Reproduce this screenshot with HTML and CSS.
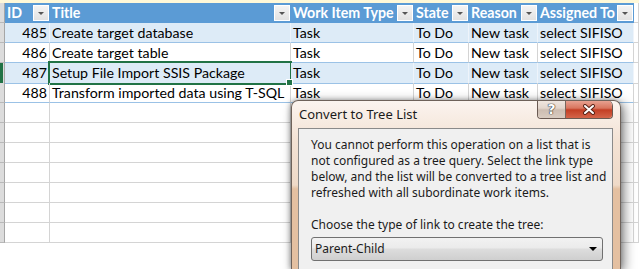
FILE: index.html
```html
<!DOCTYPE html>
<html lang="en">
<head>
  <meta charset="UTF-8">
  <title>Work Items - Convert to Tree List</title>
  <link rel="stylesheet" href="styles.css">
</head>
<body>
  <div class="sheet">
    <div class="topline"></div>
    <div class="row head">
      <div class="rh"></div>
      <div class="c">ID<span class="dd"></span></div>
      <div class="c">Title<span class="dd"></span></div>
      <div class="c">Work Item Type<span class="dd"></span></div>
      <div class="c">State<span class="dd"></span></div>
      <div class="c">Reason<span class="dd"></span></div>
      <div class="c">Assigned To<span class="dd"></span></div>
      <div class="c out"></div>
    </div>
    <div class="row item band">
      <div class="rh"></div>
      <div class="c num">485</div>
      <div class="c">Create target database</div>
      <div class="c">Task</div>
      <div class="c">To Do</div>
      <div class="c">New task</div>
      <div class="c">select SIFISO</div>
      <div class="c out"></div>
    </div>
    <div class="row item">
      <div class="rh"></div>
      <div class="c num">486</div>
      <div class="c">Create target table</div>
      <div class="c">Task</div>
      <div class="c">To Do</div>
      <div class="c">New task</div>
      <div class="c">select SIFISO</div>
      <div class="c out"></div>
    </div>
    <div class="row item band current">
      <div class="rh"></div>
      <div class="c num">487</div>
      <div class="c selected">Setup File Import SSIS Package<span class="handle"></span></div>
      <div class="c">Task</div>
      <div class="c">To Do</div>
      <div class="c">New task</div>
      <div class="c">select SIFISO</div>
      <div class="c out"></div>
    </div>
    <div class="row item last">
      <div class="rh"></div>
      <div class="c num">488</div>
      <div class="c">Transform imported data using T-SQL</div>
      <div class="c">Task</div>
      <div class="c">To Do</div>
      <div class="c">New task</div>
      <div class="c">select SIFISO</div>
      <div class="c out"><span class="resize"></span></div>
    </div>
    <div class="row"><div class="rh"></div><div class="c"></div><div class="c"></div><div class="c"></div><div class="c"></div><div class="c"></div><div class="c"></div><div class="c"></div></div>
    <div class="row"><div class="rh"></div><div class="c"></div><div class="c"></div><div class="c"></div><div class="c"></div><div class="c"></div><div class="c"></div><div class="c"></div></div>
    <div class="row"><div class="rh"></div><div class="c"></div><div class="c"></div><div class="c"></div><div class="c"></div><div class="c"></div><div class="c"></div><div class="c"></div></div>
    <div class="row"><div class="rh"></div><div class="c"></div><div class="c"></div><div class="c"></div><div class="c"></div><div class="c"></div><div class="c"></div><div class="c"></div></div>
    <div class="row"><div class="rh"></div><div class="c"></div><div class="c"></div><div class="c"></div><div class="c"></div><div class="c"></div><div class="c"></div><div class="c"></div></div>
    <div class="row"><div class="rh"></div><div class="c"></div><div class="c"></div><div class="c"></div><div class="c"></div><div class="c"></div><div class="c"></div><div class="c"></div></div>
    <div class="row"><div class="rh"></div><div class="c"></div><div class="c"></div><div class="c"></div><div class="c"></div><div class="c"></div><div class="c"></div><div class="c"></div></div>
  </div>

  <div class="dialog">
    <div class="dlg-title">
      <span class="dlg-caption">Convert to Tree List</span>
      <div class="dlg-buttons">
        <span class="btn-help">?</span>
        <span class="btn-close">
          <svg width="14" height="11" viewBox="0 0 14 11">
            <path d="M3 2 L11 9 M11 2 L3 9" stroke="#5a2418" stroke-width="4" stroke-linecap="round"/>
            <path d="M3 2 L11 9 M11 2 L3 9" stroke="#fff" stroke-width="2" stroke-linecap="round"/>
          </svg>
        </span>
      </div>
    </div>
    <div class="dlg-body">
      <p class="dlg-msg">You cannot perform this operation on a list that is<br>not configured as a tree query. Select the link type<br>below, and the list will be converted to a tree list and<br>refreshed with all subordinate work items.</p>
      <p class="dlg-label">Choose the type of link to create the tree:</p>
      <div class="combo">
        <span>Parent-Child</span>
        <span class="combo-arrow"></span>
      </div>
    </div>
  </div>
</body>
</html>
```

FILE: styles.css
```css
body {
  margin: 0;
  width: 639px;
  height: 269px;
  overflow: hidden;
  background: #fff;
  position: relative;
  font-family: Lato, "Liberation Sans", sans-serif;
  color: #000;
}

/* spreadsheet */
.topline { height: 3px; background: #fff8d8; }
.row {
  display: grid;
  grid-template-columns: 5px 45px 241px 123px 55px 69px 96px 1fr;
  height: 20px;
}
.row > div {
  box-sizing: border-box;
  border-right: 1px solid #d4d4d4;
  border-bottom: 1px solid #d4d4d4;
  font-size: 14.2px;
  line-height: 20px;
  white-space: nowrap;
  overflow: hidden;
  position: relative;
}
.row > .rh { background: #dcdcdc; border-right-color: #a6a6a6; border-bottom-color: #b8b8b8; }
.row .c { padding-left: 2px; }

.head .c {
  background: #5b9bd5;
  color: #fff;
  font-weight: bold;
  border-right-color: #5b9bd5;
  border-bottom-color: #5b9bd5;
  display: flex;
  align-items: center;
  justify-content: space-between;
  padding-right: 0;
}
.head .c.out { background: #fff; border-right-color: #d4d4d4; border-bottom-color: #d4d4d4; }
.dd {
  width: 14px;
  height: 14px;
  border: 1px solid #fff;
  background: linear-gradient(#f4f4f4, #e2e2e2);
  position: relative;
  flex-shrink: 0;
}
.dd::after {
  content: "";
  position: absolute;
  left: 4px;
  top: 6px;
  border-left: 3px solid transparent;
  border-right: 3px solid transparent;
  border-top: 3px solid #555;
}

.item .c { border-bottom-color: #9bc2e6; }
.item .c.out { border-bottom-color: #d4d4d4; }
.band .c { background: #ddebf7; border-right-color: #eef4fb; }
.band .c.out { background: #fff; border-right-color: #d4d4d4; }
.item .c.num { text-align: right; padding-left: 0; padding-right: 2px; }
.current .rh { box-shadow: inset 3px 0 0 #217346; }

.selected { overflow: visible !important; }
.selected::after {
  content: "";
  position: absolute;
  left: -2px;
  top: -2px;
  right: -2px;
  bottom: -2px;
  border: 2px solid #217346;
  pointer-events: none;
}
.handle {
  position: absolute;
  right: -3px;
  bottom: -3px;
  width: 5px;
  height: 5px;
  background: #217346;
  border: 1px solid #fff;
  z-index: 2;
}
.resize {
  position: absolute;
  left: -3px;
  bottom: -1px;
  width: 3px;
  height: 3px;
  background: #2f6fb6;
}

/* dialog */
.dialog {
  position: absolute;
  left: 291px;
  top: 100px;
  width: 330px;
  height: 169px;
  overflow: hidden;
  box-sizing: border-box;
  border: 1px solid #6e625a;
  border-bottom: none;
  border-radius: 7px 7px 0 0;
  padding: 0 7px 0 6px;
  background: linear-gradient(180deg, #fbf4ef 0, #f3e2d4 40px, #efdac8 84px, #e4c0a1 88px, #e4c0a1 100%);
  box-shadow: 3px 3px 12px rgba(0, 0, 0, 0.5), -1px 0 5px rgba(0, 0, 0, 0.3);
  font-family: "Noto Sans", "Open Sans", sans-serif;
  color: #1b1b1b;
}
.dlg-title {
  height: 27px;
  display: flex;
  justify-content: space-between;
  align-items: flex-start;
}
.dlg-caption {
  font-size: 13px;
  padding: 5px 0 0 1px;
  line-height: 17px;
}
.dlg-buttons {
  display: flex;
  margin-top: -1px;
  border: 1px solid #6a5a52;
  border-top: none;
  border-radius: 0 6px 4px 4px;
  overflow: hidden;
  height: 18px;
}
.btn-help {
  width: 27px;
  background: linear-gradient(#f1e8e1 0, #e3d6cc 45%, #cdbdb1 55%, #d9cbc0 100%);
  border-right: 1px solid #7a665c;
  color: #fff;
  font: bold 14px/18px "DejaVu Sans", sans-serif;
  text-align: center;
  text-shadow: 0 0 1px #333, 0 0 1px #333, 0 0 1px #333;
}
.btn-close {
  width: 46px;
  background: linear-gradient(#eaa797 0, #d9765f 45%, #c33f25 55%, #d4654a 100%);
  display: flex;
  align-items: center;
  justify-content: center;
}
.dlg-body {
  height: 160px;
  border: 1px solid #8a8a8a;
  background: #f0f0f0;
  padding: 8px 12px 0 12px;
  font-size: 12px;
  line-height: 16px;
}
.dlg-msg { margin: 0; white-space: nowrap; }
.dlg-label { margin: 16px 0 0 0; }
.combo {
  margin-top: 4px;
  width: 292px;
  height: 24px;
  box-sizing: border-box;
  border: 1px solid #707070;
  border-radius: 3px;
  background: linear-gradient(#f2f2f2 0, #ebebeb 45%, #dddddd 50%, #cfcfcf 100%);
  display: flex;
  align-items: center;
  justify-content: space-between;
  padding: 0 5px 0 3px;
}
.combo-arrow {
  border-left: 4px solid transparent;
  border-right: 4px solid transparent;
  border-top: 4px solid #000;
}
```
